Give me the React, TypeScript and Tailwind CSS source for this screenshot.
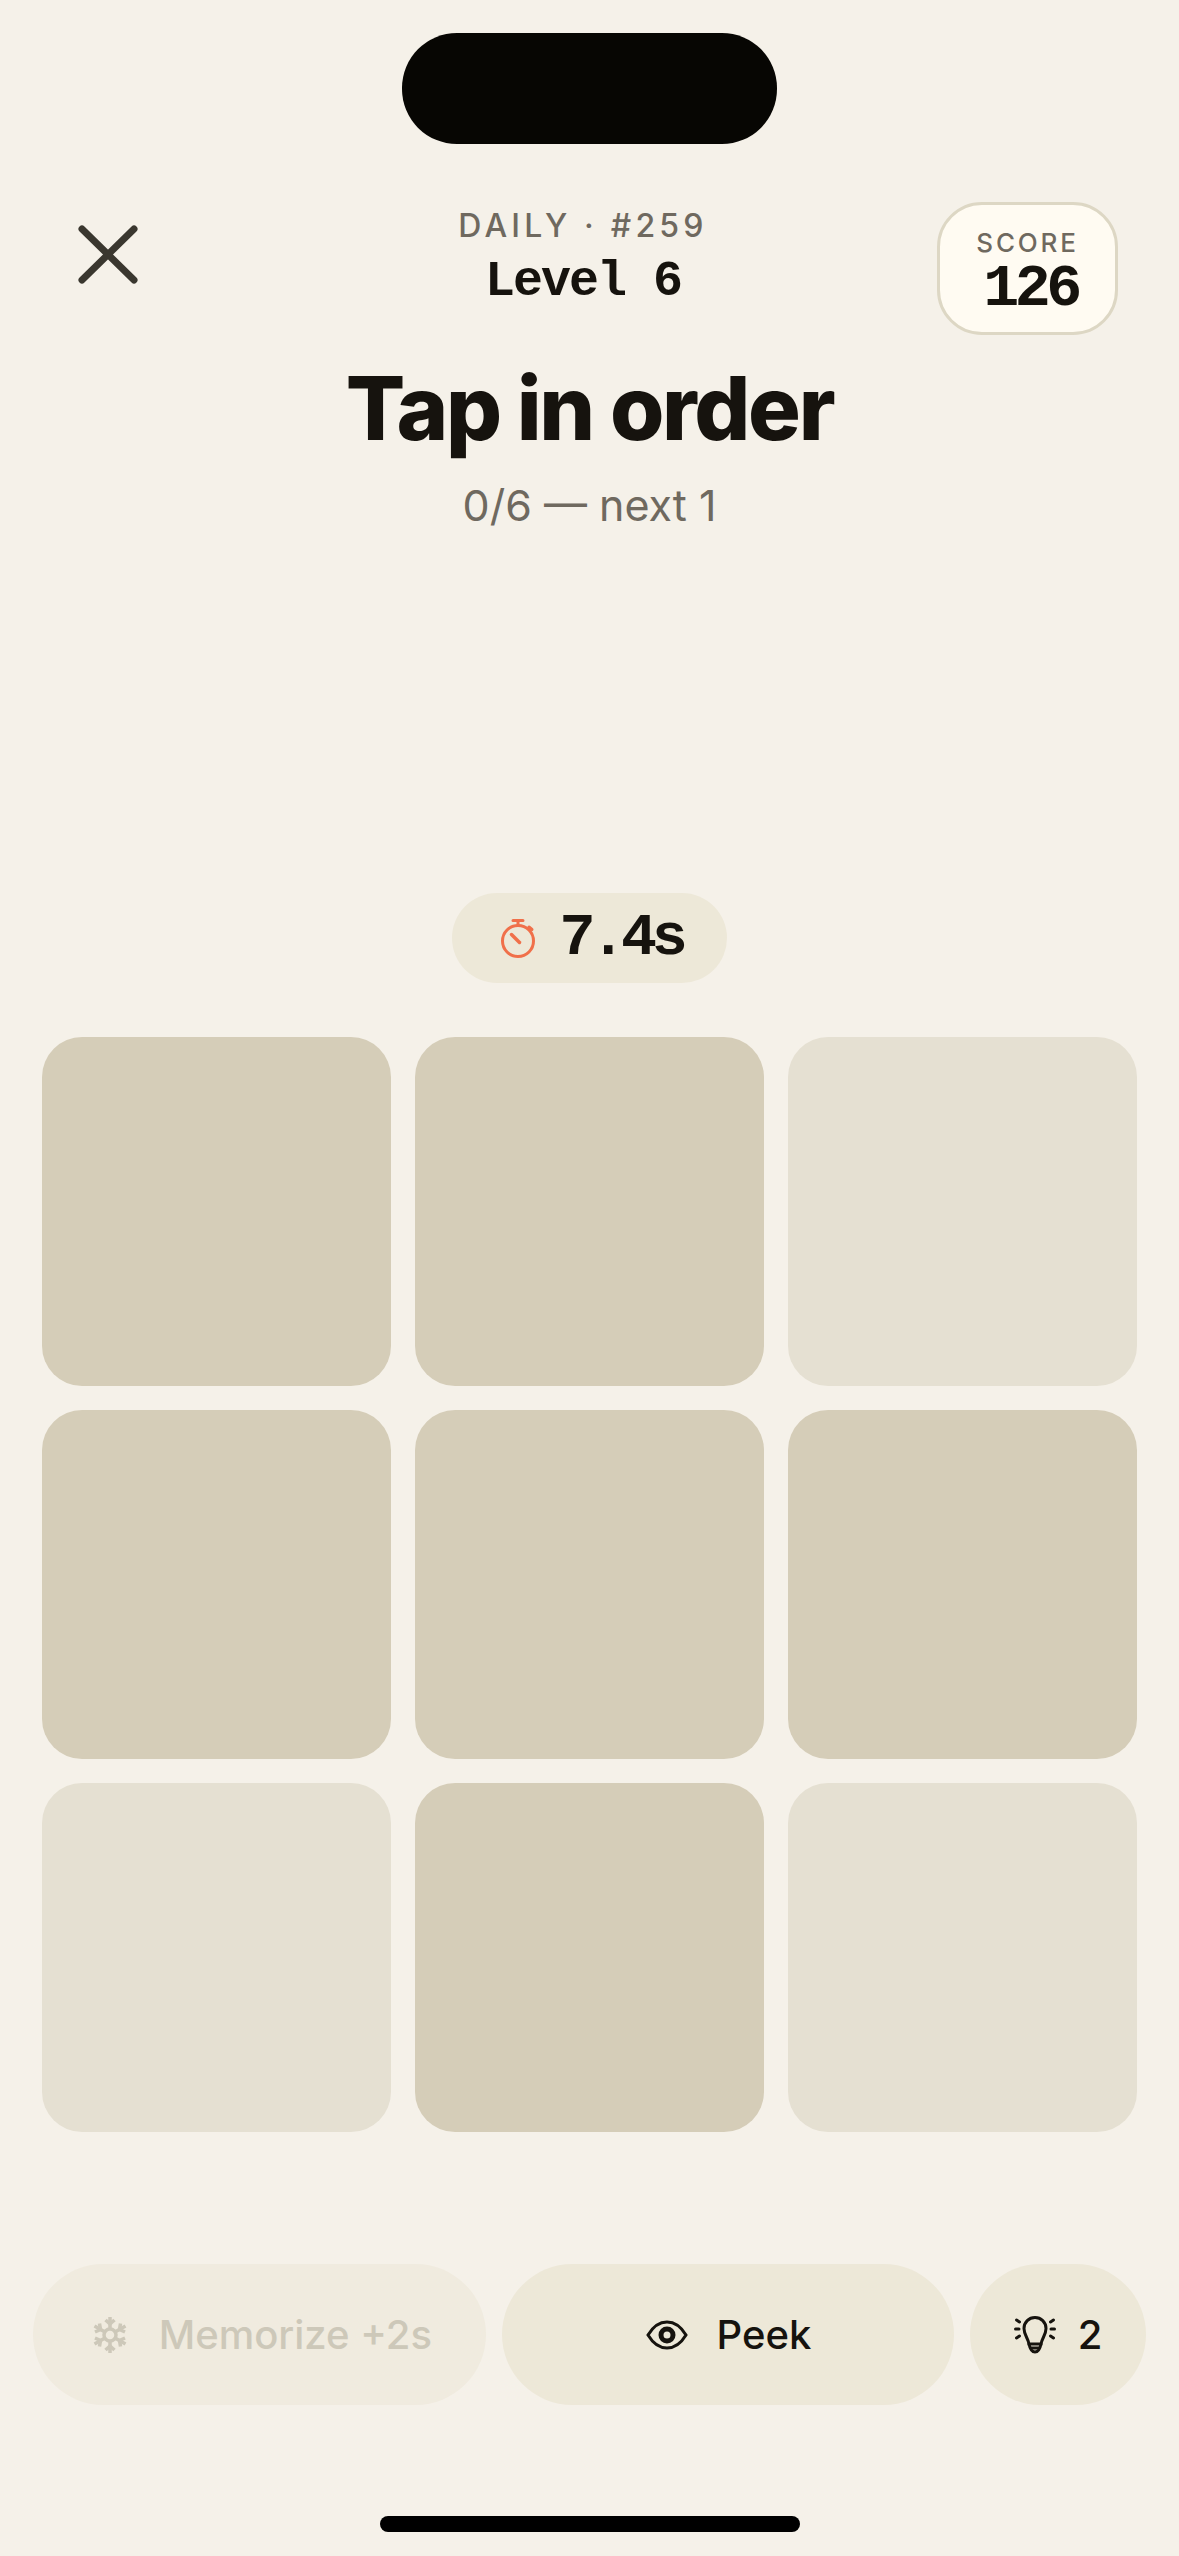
const tiles = [
  true, true, false,
  true, true, true,
  false, true, false,
];

const sans = "font-['Inter',sans-serif]";
const mono = "font-['Liberation_Mono',monospace]";

function CloseIcon() {
  return (
    <svg width="60" height="60" viewBox="0 0 60 60" fill="none" stroke="#3a372f" strokeWidth="7" strokeLinecap="round">
      <path d="M4 4 L56 55 M56 4 L4 55" />
    </svg>
  );
}

function TimerIcon() {
  return (
    <svg width="36" height="40" viewBox="0 0 36 40" fill="none" stroke="#f0704a" strokeWidth="3" strokeLinecap="round">
      <circle cx="18" cy="23" r="15.5" />
      <path d="M13 2.5 H23 M18 3 V7 M29 9 L32 11.5" />
      <path d="M11.5 16.5 L19.5 24.5" strokeWidth="3.5" />
    </svg>
  );
}

function SnowflakeIcon() {
  return (
    <svg width="34" height="38" viewBox="0 0 34 38" fill="none" stroke="#cdc8b9" strokeWidth="3.5">
      <circle cx="17" cy="19" r="6" />
      <path d="M17 1 V13 M17 25 V37 M1.5 10 L12 16 M22 22 L32.5 28 M32.5 10 L22 16 M12 22 L1.5 28" />
      <path d="M12.5 4 L17 8 L21.5 4 M12.5 34 L17 30 L21.5 34 M2 16 L7.5 13.5 L6.5 7.5 M32 16 L26.5 13.5 L27.5 7.5 M2 22 L7.5 24.5 L6.5 30.5 M32 22 L26.5 24.5 L27.5 30.5" />
    </svg>
  );
}

function EyeIcon() {
  return (
    <svg width="42" height="30" viewBox="0 0 42 30" fill="none" stroke="#16130e" strokeWidth="3">
      <path d="M2 15 C8 5 14 2 21 2 C28 2 34 5 40 15 C34 25 28 28 21 28 C14 28 8 25 2 15 Z" />
      <circle cx="21" cy="15" r="6" strokeWidth="5" />
    </svg>
  );
}

function BulbIcon() {
  return (
    <svg width="42" height="38" viewBox="0 0 42 38" fill="none" stroke="#16130e" strokeWidth="3" strokeLinecap="round">
      <path d="M15 28 C14 22 10 19 10 12.5 C10 6 15 1.5 21 1.5 C27 1.5 32 6 32 12.5 C32 19 28 22 27 28 Z" />
      <path d="M15 28 C16 33 18 36 21 36 C24 36 26 33 27 28" />
      <path d="M17 32 H25" />
      <path d="M1.5 13 H5 M37 13 H40.5 M2.5 4 L5.5 6 M39.5 4 L36.5 6 M2.5 22 L5.5 20 M39.5 22 L36.5 20" />
    </svg>
  );
}

export default function App() {
  return (
    <div className={`relative flex h-[2556px] w-[1179px] flex-col items-center overflow-hidden bg-[#f5f1e9] ${sans}`}>
      <div className="mt-[33px] h-[111px] w-[375px] shrink-0 rounded-[55px] bg-[#070603]" />

      <header className="mt-[58px] flex h-[133px] w-full shrink-0 items-start px-[61px]">
        <div className="w-[168px] pl-[17px] pt-[23px]">
          <CloseIcon />
        </div>
        <div className="flex-1 pt-[4px] text-center">
          <div className="text-[32px] leading-[40px] font-medium tracking-[4.2px] text-[#6f695f]">DAILY · #259</div>
          <div className={`mt-[8px] text-[50px] leading-[56px] font-bold tracking-[-2px] text-[#16130e] ${mono}`}>Level 6</div>
        </div>
        <div className="flex h-[133px] w-[181px] flex-col items-center rounded-[45px] border-[3px] border-[#ddd7c4] bg-[#fffbf2] pt-[22px]">
          <div className="text-[26px] leading-[32px] font-medium tracking-[2.8px] text-[#6f695f]">SCORE</div>
          <div className={`mt-[5px] ml-[6px] text-[60px] leading-[50px] font-bold tracking-[-4.5px] text-[#16130e] ${mono}`}>126</div>
        </div>
      </header>

      <h1 className="mt-[23px] text-[88px] leading-[100px] font-extrabold tracking-[-2.3px] text-[#16130e]">Tap in order</h1>
      <p className="mt-[22px] text-[43px] leading-[50px] text-[#6f695f]">0/6 — next 1</p>

      <div className="mt-[363px] flex h-[90px] w-[275px] shrink-0 items-center justify-center gap-[23px] rounded-full bg-[#ede8d8] pl-[4px]">
        <TimerIcon />
        <span className={`text-[60px] leading-none font-bold tracking-[-5.2px] text-[#16130e] ${mono}`}>7.4s</span>
      </div>

      <div className="mt-[54px] grid grid-cols-[349px_349px_349px] gap-[24px]">
        {tiles.map((dark, i) => (
          <div key={i} className={`h-[349px] rounded-[40px] ${dark ? "bg-[#d5cdb8]" : "bg-[#e5e0d2]"}`} />
        ))}
      </div>

      <div className="mt-[132px] flex w-full gap-[16px] px-[33px]">
        <button className="flex h-[141px] w-[453px] items-center justify-center gap-[32px] rounded-full bg-[#f0ebdf] pl-[6px] text-[40px] font-[550] text-[#cdc8b9]">
          <SnowflakeIcon />
          Memorize +2s
        </button>
        <button className="flex h-[141px] w-[453px] items-center justify-center gap-[28px] rounded-full bg-[#ede8d8] pl-[2px] text-[40px] font-[550] text-[#16130e]">
          <EyeIcon />
          Peek
        </button>
        <button className="flex h-[141px] w-[176px] items-center justify-center gap-[22px] rounded-full bg-[#ede8d8] text-[40px] font-[550] text-[#16130e]">
          <BulbIcon />
          2
        </button>
      </div>

      <div className="mt-[111px] h-[16px] w-[420px] rounded-full bg-black" />
    </div>
  );
}
